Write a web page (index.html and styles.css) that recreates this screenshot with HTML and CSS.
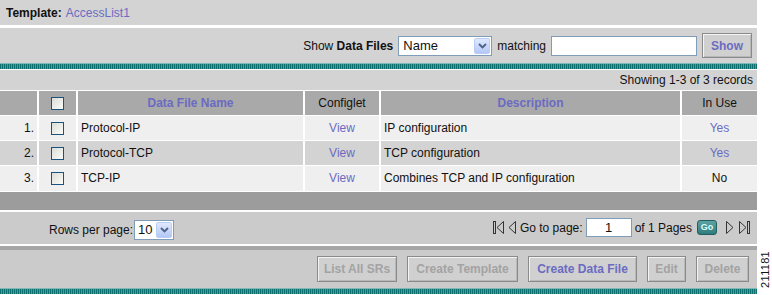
FILE: index.html
```html
<!DOCTYPE html>
<html>
<head>
<meta charset="utf-8">
<link rel="stylesheet" href="styles.css">
</head>
<body>
<div class="wrap">
  <div class="page">
    <div class="tpl-bar"><b>Template:</b> <span class="link">AccessList1</span></div>
    <div class="search-bar">
      <span class="lbl">Show <b>Data Files</b></span>
      <div class="fsel w-name"><span class="fsel-val">Name</span><span class="fsel-btn"><svg width="9" height="6" viewBox="0 0 9 6"><path d="M1 1 L4.5 4.5 L8 1" fill="none" stroke="#4d6185" stroke-width="1.8"/></svg></span></div>
      <span class="lbl">matching</span>
      <div class="ftext w-match"></div>
      <div class="btn btn-show">Show</div>
    </div>
    <div class="teal"></div>
    <div class="showing">Showing 1-3 of 3 records</div>
    <table class="grid">
      <colgroup>
        <col class="c1"><col class="c2"><col class="c3"><col class="c4"><col class="c5"><col class="c6">
      </colgroup>
      <thead>
        <tr>
          <th></th>
          <th><span class="cb"></span></th>
          <th class="link-h">Data File Name</th>
          <th>Configlet</th>
          <th class="link-h">Description</th>
          <th>In Use</th>
        </tr>
      </thead>
      <tbody>
        <tr class="light">
          <td class="num">1.</td><td class="ctr"><span class="cb"></span></td><td>Protocol-IP</td><td class="ctr link">View</td><td>IP configuration</td><td class="ctr link">Yes</td>
        </tr>
        <tr class="dark">
          <td class="num">2.</td><td class="ctr"><span class="cb"></span></td><td>Protocol-TCP</td><td class="ctr link">View</td><td>TCP configuration</td><td class="ctr link">Yes</td>
        </tr>
        <tr class="light">
          <td class="num">3.</td><td class="ctr"><span class="cb"></span></td><td>TCP-IP</td><td class="ctr link">View</td><td>Combines TCP and IP configuration</td><td class="ctr">No</td>
        </tr>
      </tbody>
    </table>
    <div class="dark-bar"></div>
    <div class="pager">
      <div class="rpp">
        <span>Rows per page:</span>
        <div class="fsel w-rows"><span class="fsel-val">10</span><span class="fsel-btn"><svg width="9" height="6" viewBox="0 0 9 6"><path d="M1 1 L4.5 4.5 L8 1" fill="none" stroke="#4d6185" stroke-width="1.8"/></svg></span></div>
      </div>
      <div class="nav">
        <svg class="ico" width="12" height="15" viewBox="0 0 12 15"><rect x="0.5" y="1.5" width="2" height="12" fill="none" stroke="#333" stroke-width="1"/><path d="M10.5 1.5 L4 7.5 L10.5 13.5 Z" fill="none" stroke="#333" stroke-width="1"/></svg>
        <svg class="ico" width="9" height="15" viewBox="0 0 9 15"><path d="M7.5 1.5 L1 7.5 L7.5 13.5 Z" fill="none" stroke="#333" stroke-width="1"/></svg>
        <span>Go to page:</span>
        <div class="ftext w-page">1</div>
        <span>of 1 Pages</span>
        <div class="go">Go</div>
        <svg class="ico" width="10" height="15" viewBox="0 0 10 15"><path d="M1.5 1.5 L8 7.5 L1.5 13.5 Z" fill="none" stroke="#333" stroke-width="1"/></svg>
        <svg class="ico" width="13" height="15" viewBox="0 0 13 15"><path d="M1.5 1.5 L8 7.5 L1.5 13.5 Z" fill="none" stroke="#333" stroke-width="1"/><rect x="9.5" y="1.5" width="2" height="12" fill="none" stroke="#333" stroke-width="1"/></svg>
      </div>
    </div>
    <div class="mid-strip"></div>
    <div class="actions">
      <div class="btn off b1">List All SRs</div>
      <div class="btn off b2">Create Template</div>
      <div class="btn on b3">Create Data File</div>
      <div class="btn off b4">Edit</div>
      <div class="btn off b5">Delete</div>
    </div>
    <div class="teal"></div>
  </div>
  <div class="side"><span class="fig">211181</span></div>
</div>
</body>
</html>
```

FILE: styles.css
```css
* { box-sizing: border-box; }
html, body { margin: 0; padding: 0; background: #fff; }
body {
  font-family: "Liberation Sans", Arial, sans-serif;
  font-size: 12px;
  color: #111;
}
.wrap { display: flex; align-items: flex-start; width: 772px; height: 295px; }
.page { width: 757px; display: flex; flex-direction: column; }
.side { width: 15px; height: 292px; display: flex; align-items: flex-end; justify-content: center; padding-bottom: 4px; }
.fig {
  writing-mode: vertical-rl;
  transform: rotate(180deg);
  font-size: 11px;
  letter-spacing: 0.3px;
  color: #111;
}
.link { color: #6b6bc2; }
.tpl-bar {
  height: 25px;
  background: #d3d3d3;
  padding-left: 6px;
  display: flex;
  align-items: center;
  gap: 4px;
  font-size: 12px;
}
.search-bar {
  margin-top: 3px;
  height: 35px;
  background: #d3d3d3;
  display: flex;
  align-items: center;
  justify-content: flex-end;
  padding-right: 5px;
  gap: 5px;
  font-size: 12px;
}
.search-bar .lbl b { font-weight: bold; }
.fsel {
  height: 20px;
  background: #fff;
  border: 1px solid #7f9db9;
  display: flex;
  align-items: stretch;
  justify-content: space-between;
}
.fsel-val { font-size: 13px; padding-left: 4px; line-height: 18px; }
.fsel-btn {
  width: 16px;
  margin: 1px;
  background: linear-gradient(#dfe8fd, #b4c8f6);
  border: 1px solid #b9cdf5;
  border-radius: 2px;
  display: flex;
  align-items: center;
  justify-content: center;
}
.w-name { width: 94px; }
.w-rows { width: 40px; }
.w-rows .fsel-val { padding-left: 3px; font-size: 13px; }
.ftext {
  height: 20px;
  background: #fff;
  border: 1px solid #7f9db9;
  font-size: 13px;
  line-height: 18px;
  text-align: center;
}
.w-match { width: 146px; }
.w-page { width: 46px; height: 19px; }
.btn {
  display: flex;
  align-items: center;
  justify-content: center;
  font-weight: bold;
  font-size: 12px;
  background: #d0d0d0;
  border: 1px solid #8a8a8a;
  box-shadow: inset 1px 1px 0 #f4f4f4, inset -1px -1px 0 #b8b8b8;
}
.btn-show { width: 50px; height: 25px; color: #6b6bc2; margin-left: 0; }
.teal {
  height: 6px;
  background: repeating-linear-gradient(90deg, #0e6f6f 0 1px, #4f9999 1px 2px);
  border-top: 1px solid #7fb8b8;
}
.showing {
  margin-top: 1px;
  height: 20px;
  background: #d3d3d3;
  text-align: right;
  padding-right: 4px;
  line-height: 20px;
  font-size: 12px;
}
.grid {
  border-collapse: collapse;
  width: 757px;
  table-layout: fixed;
  background: #d3d3d3;
}
.c1 { width: 38px; }
.c2 { width: 39px; }
.c3 { width: 227px; }
.c4 { width: 76px; }
.c5 { width: 301px; }
.c6 { width: 76px; }
.grid th, .grid td {
  border-left: 2px solid #fff;
  border-top: 1px solid #fff;
  padding: 0 3px;
  font-size: 12px;
  white-space: nowrap;
  line-height: 14px;
}
.grid th:first-child, .grid td:first-child { border-left: 0; }
.grid th {
  height: 25px;
  background: #a9a9a9;
  font-weight: normal;
  text-align: center;
}
.grid th.link-h { color: #6b6bc2; font-weight: bold; }
.grid td { height: 25px; }
.grid tr.light td { background: #efefef; }
.grid tr.dark td { background: #d3d3d3; }
.grid td.num { text-align: right; padding-right: 3px; }
.grid td.ctr { text-align: center; }
.cb {
  display: inline-block;
  width: 13px;
  height: 13px;
  vertical-align: middle;
  border: 1px solid #1c5180;
  background: linear-gradient(135deg, #dcdcd7, #fbfbf9);
}
.dark-bar { height: 19px; background: #9c9c9c; border-top: 1px solid #fff; }
.pager {
  margin-top: 2px;
  height: 32px;
  background: #cbcbcb;
  display: flex;
  align-items: center;
  justify-content: space-between;
  padding-left: 49px;
  padding-right: 6px;
  font-size: 12px;
}
.rpp { display: flex; align-items: center; gap: 1px; padding-top: 4px; }
.nav { display: flex; align-items: center; gap: 3px; }
.nav .ico { display: block; }
.go {
  width: 20px;
  height: 15px;
  margin: 0 5px 0 2px;
  border-radius: 3px;
  background: linear-gradient(#5ea3a3, #2f7b7b);
  border: 1px solid #1f5f5f;
  color: #dff;
  font-size: 9px;
  font-weight: bold;
  text-align: center;
  line-height: 13px;
}
.mid-strip { margin-top: 2px; height: 4px; background: #a6a6a6; }
.actions {
  height: 38px;
  background: #cbcbcb;
  display: flex;
  align-items: center;
  justify-content: flex-end;
  padding-right: 8px;
  gap: 10px;
}
.actions .btn { height: 26px; }
.btn.off { color: #a3a3a3; }
.btn.on { color: #6b6bc2; }
.b1 { width: 80px; }
.b2 { width: 111px; }
.b3 { width: 109px; }
.b4 { width: 39px; }
.b5 { width: 53px; }
```
